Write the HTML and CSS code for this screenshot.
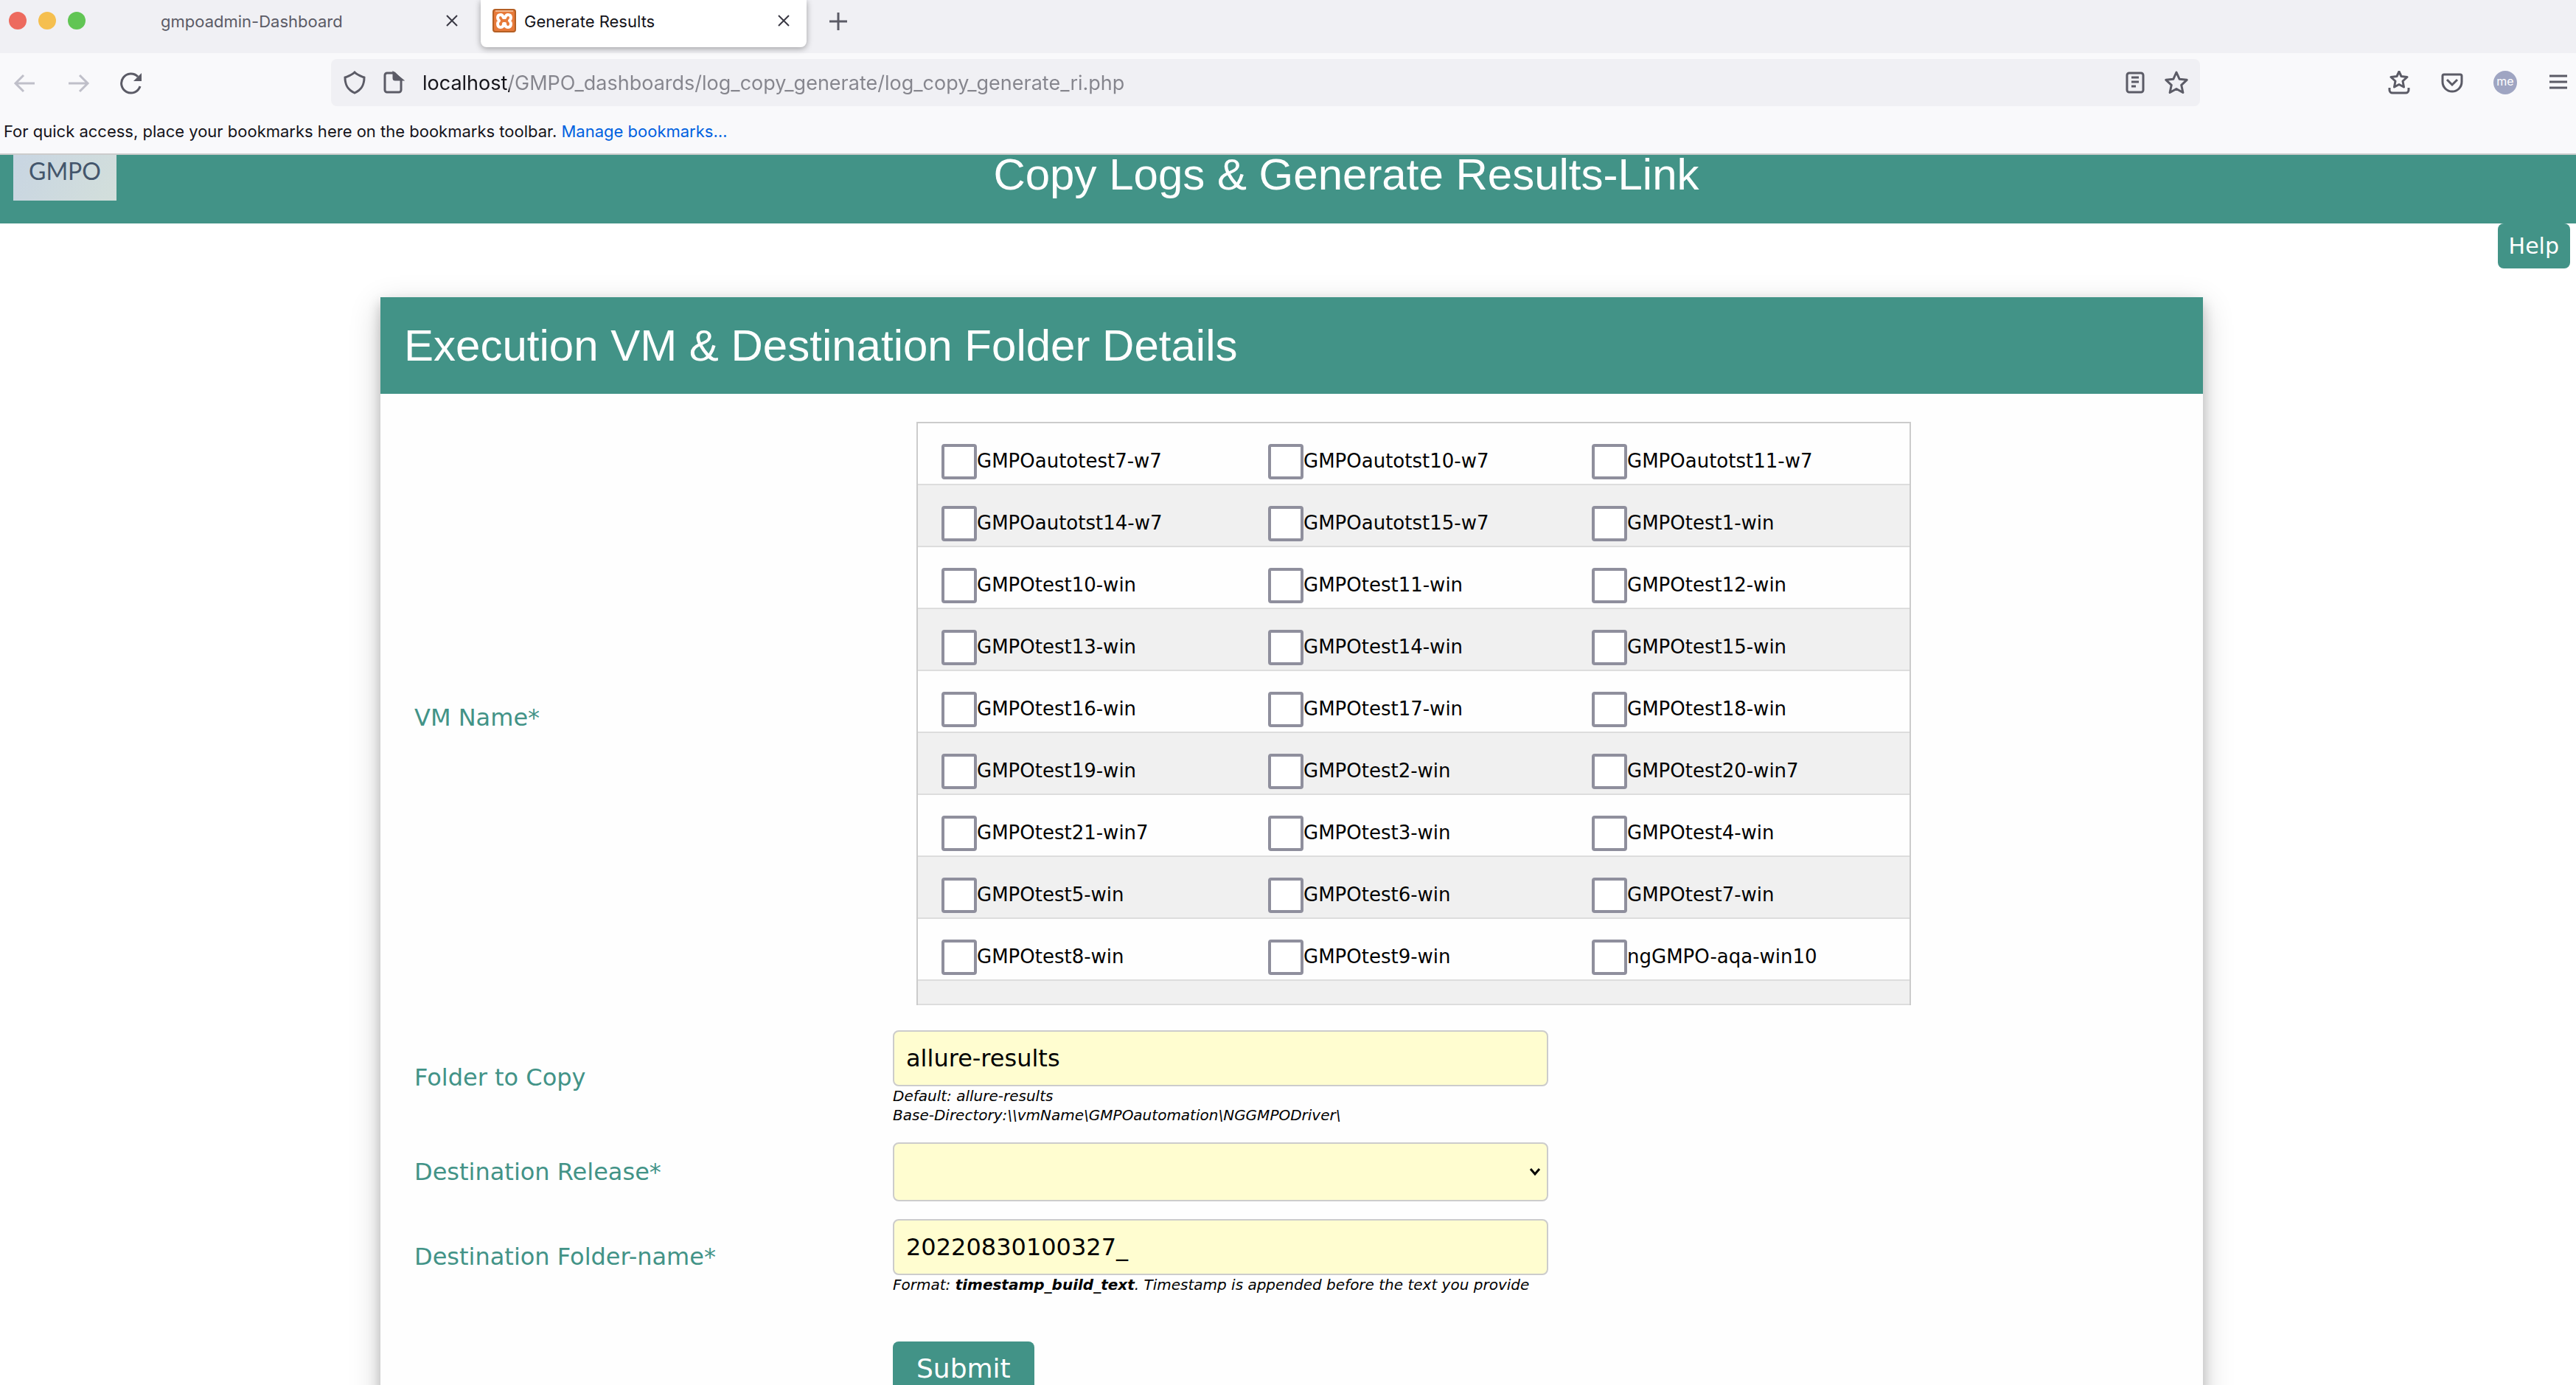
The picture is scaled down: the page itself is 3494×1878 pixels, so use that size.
FILE: index.html
```html
<!DOCTYPE html>
<html lang="en">
<head>
<meta charset="utf-8">
<title>Generate Results</title>
<link rel="stylesheet" href="styles.css">
</head>
<body>
<div class="browser">
  <div class="tabstrip">
    <div class="lights"><span class="light light-red"></span><span class="light light-yellow"></span><span class="light light-green"></span></div>
    <div class="tab">
      <span class="tab-title">gmpoadmin-Dashboard</span>
      <button class="icon-button" type="button" aria-label="Close tab"><svg class="icon-small" viewBox="0 0 16 16"><path d="M1 1l14 14M15 1L1 15"/></svg></button>
    </div>
    <div class="tab tab-active">
      <svg class="favicon" viewBox="0 0 32 32"><rect x="1" y="1" width="30" height="30" rx="3" fill="#e77a3a" stroke="#b45f24" stroke-width="2"/><path d="M4 3h24" stroke="#f3b78e" stroke-width="2"/><path d="M11 8c-3 0-4 2-4 4 0 2 1 3 2 4-1 1-2 2-2 4 0 3 1 5 4 5 3 0 4-2 4-5h2c0 3 1 5 4 5 3 0 4-2 4-5 0-2-1-3-2-4 1-1 2-2 2-4 0-2-1-4-4-4-2 0-3 1-4 4h-2c-1-3-2-4-4-4z" fill="none" stroke="#fff" stroke-width="4" stroke-linejoin="round"/></svg>
      <span class="tab-title">Generate Results</span>
      <button class="icon-button" type="button" aria-label="Close tab"><svg class="icon-small" viewBox="0 0 16 16"><path d="M1 1l14 14M15 1L1 15"/></svg></button>
    </div>
    <button class="icon-button new-tab" type="button" aria-label="New tab"><svg class="icon" viewBox="0 0 32 32"><path d="M16 5v24M4 17h24"/></svg></button>
  </div>
  <div class="toolbar">
    <div class="nav">
      <button class="icon-button muted" type="button" aria-label="Back"><svg class="icon" viewBox="0 0 32 32"><path d="M29 17H3M14 6L3 17l11 11"/></svg></button>
      <button class="icon-button muted" type="button" aria-label="Forward"><svg class="icon" viewBox="0 0 32 32"><path d="M3 17h26M18 6l11 11-11 11"/></svg></button>
      <button class="icon-button" type="button" aria-label="Reload"><svg class="icon" viewBox="0 0 32 32"><path d="M28 21A13 13 0 1 1 25 8"/><path d="M30 3v11H19z" fill="currentColor" stroke="none"/></svg></button>
    </div>
    <div class="urlbar">
      <svg class="icon" viewBox="0 0 32 32"><path d="M16 2C12 6 8 7 3 9c0 11 4 17 13 21 9-4 13-10 13-21-5-2-9-3-13-7z"/></svg>
      <svg class="icon" viewBox="0 0 32 32"><path d="M18 3H8a3 3 0 0 0-3 3v20a3 3 0 0 0 3 3h16a3 3 0 0 0 3-3V12z"/><path d="M17 3v7a2 2 0 0 0 2 2h9z" fill="currentColor"/></svg>
      <input class="url" type="text" aria-label="Address" value="localhost/GMPO_dashboards/log_copy_generate/log_copy_generate_ri.php">
      <div class="url-actions">
        <button class="icon-button" type="button" aria-label="Reader view"><svg class="icon" viewBox="0 0 32 32"><rect x="5" y="3" width="22" height="26" rx="3"/><path d="M11 9h10M11 15h10M11 21h6"/></svg></button>
        <button class="icon-button" type="button" aria-label="Bookmark"><svg class="icon" viewBox="0 0 32 32"><path d="M16 2l4.200 9.300 10 1-7.500 7 2.200 10.200L16 24.500l-8.900 5L9.300 19.300l-7.500-7 10-1z" stroke-linejoin="round"/></svg></button>
      </div>
    </div>
    <div class="actions">
      <button class="icon-button" type="button" aria-label="Bookmarks"><svg class="icon" viewBox="0 0 32 32"><path d="M16 1l3 6.500 8 1-6 5.500 1.500 8L16 18.500 9.500 22l1.500-8-6-5.500 8-1zM3 23v3a4 4 0 0 0 4 4h18a4 4 0 0 0 4-4v-3" stroke-linejoin="round"/></svg></button>
      <button class="icon-button" type="button" aria-label="Pocket"><svg class="icon" viewBox="0 0 32 32"><path d="M5 5h22a2 2 0 0 1 2 2v8a13 13 0 0 1-26 0V7a2 2 0 0 1 2-2zM9 12l7 7 7-7"/></svg></button>
      <button class="avatar" type="button">me</button>
      <button class="icon-button" type="button" aria-label="Menu"><svg class="icon" viewBox="0 0 32 32"><path d="M4 7h24M4 15h24M4 23h24"/></svg></button>
    </div>
  </div>
  <div class="bookmarks">For quick access, place your bookmarks here on the bookmarks toolbar. <a href="#bookmarks">Manage bookmarks…</a></div>
</div>

<div class="page">
  <header class="banner">
    <div class="logo">GMPO</div>
    <h1 class="title">Copy Logs &amp; Generate Results-Link</h1>
  </header>
  <div class="help-row"><button class="help" type="button">Help</button></div>

  <main class="card">
    <h2 class="card-title">Execution VM &amp; Destination Folder Details</h2>
    <form class="form">
      <span class="label" id="vm-label">VM Name*</span>
      <div class="vm-box">
        <table class="vms" aria-labelledby="vm-label">
          <colgroup><col class="col-a"><col class="col-b"><col></colgroup>
          <tbody>
          <tr><td><label><input type="checkbox">GMPOautotest7-w7</label></td><td><label><input type="checkbox">GMPOautotst10-w7</label></td><td><label><input type="checkbox">GMPOautotst11-w7</label></td></tr>
          <tr><td><label><input type="checkbox">GMPOautotst14-w7</label></td><td><label><input type="checkbox">GMPOautotst15-w7</label></td><td><label><input type="checkbox">GMPOtest1-win</label></td></tr>
          <tr><td><label><input type="checkbox">GMPOtest10-win</label></td><td><label><input type="checkbox">GMPOtest11-win</label></td><td><label><input type="checkbox">GMPOtest12-win</label></td></tr>
          <tr><td><label><input type="checkbox">GMPOtest13-win</label></td><td><label><input type="checkbox">GMPOtest14-win</label></td><td><label><input type="checkbox">GMPOtest15-win</label></td></tr>
          <tr><td><label><input type="checkbox">GMPOtest16-win</label></td><td><label><input type="checkbox">GMPOtest17-win</label></td><td><label><input type="checkbox">GMPOtest18-win</label></td></tr>
          <tr><td><label><input type="checkbox">GMPOtest19-win</label></td><td><label><input type="checkbox">GMPOtest2-win</label></td><td><label><input type="checkbox">GMPOtest20-win7</label></td></tr>
          <tr><td><label><input type="checkbox">GMPOtest21-win7</label></td><td><label><input type="checkbox">GMPOtest3-win</label></td><td><label><input type="checkbox">GMPOtest4-win</label></td></tr>
          <tr><td><label><input type="checkbox">GMPOtest5-win</label></td><td><label><input type="checkbox">GMPOtest6-win</label></td><td><label><input type="checkbox">GMPOtest7-win</label></td></tr>
          <tr><td><label><input type="checkbox">GMPOtest8-win</label></td><td><label><input type="checkbox">GMPOtest9-win</label></td><td><label><input type="checkbox">ngGMPO-aqa-win10</label></td></tr>
          <tr class="spacer"><td colspan="3"></td></tr>
          </tbody>
        </table>
      </div>

      <label class="label" for="folder">Folder to Copy</label>
      <div>
        <input class="control" id="folder" type="text" value="allure-results">
        <p class="hint">Default: allure-results<br>Base-Directory:\\vmName\GMPOautomation\NGGMPODriver\</p>
      </div>

      <label class="label" for="release">Destination Release*</label>
      <div class="select-wrap">
        <select class="control control-select" id="release"><option></option></select>
        <svg class="chevron" viewBox="0 0 16 12"><path d="M2 2l6 7 6-7"/></svg>
      </div>

      <label class="label" for="name">Destination Folder-name*</label>
      <div>
        <input class="control" id="name" type="text" value="20220830100327_">
        <p class="hint">Format: <b>timestamp_build_text</b>. Timestamp is appended before the text you provide</p>
      </div>

      <div class="submit-row"><button class="submit" type="submit">Submit</button></div>
    </form>
  </main>
</div>
</body>
</html>
```
FILE: styles.css
```css
* { box-sizing: border-box; }

body {
  margin: 0;
  height: 100vh;
  display: flex;
  flex-direction: column;
  overflow: hidden;
  background: #fff;
  color: #000;
  font-family: Verdana, "DejaVu Sans", sans-serif;
}

button, input, select { font-family: inherit; }

/* Browser window */
.browser {
  flex: none;
  background: #f9f9fb;
  border-bottom: 2px solid #ccc;
  color: #15141a;
  font-family: Inter, sans-serif;
  font-size: 22px;
}

.tabstrip {
  display: flex;
  height: 72px;
  padding-left: 12px;
  background: #f0f0f4;
}

.lights { display: flex; gap: 16px; padding-top: 16px; }
.light { width: 24px; height: 24px; border-radius: 50%; }
.light-red { background: #ed6a5e; }
.light-yellow { background: #f5bf4f; }
.light-green { background: #61c554; }

.tab {
  display: flex;
  align-items: center;
  width: 442px;
  height: 64px;
  padding: 0 23px 8px 16px;
  color: #5b5b66;
}
.tab:not(.tab-active) { width: 524px; padding-left: 102px; margin-right: 12px; padding-right: 19px; }
.tab-active {
  background: #fff;
  border-radius: 0 0 8px 8px;
  box-shadow: 0 2px 8px rgba(0, 0, 0, .35);
  color: #15141a;
}
.tab-title { flex: 1; line-height: 28px; padding-top: 2px; white-space: nowrap; }
.favicon { width: 32px; height: 32px; margin-right: 11px; }

.icon-button {
  display: flex;
  padding: 0;
  border: 0;
  background: none;
  color: #5b5b66;
}
.muted { color: #bfbfc9; }
.icon, .icon-small { width: 32px; height: 32px; fill: none; stroke: currentColor; stroke-width: 3; }
.icon-small { width: 16px; height: 16px; stroke: #3a3944; stroke-width: 2; }
.new-tab { margin: 12px 0 0 27px; height: 32px; }

.toolbar { display: flex; align-items: center; height: 80px; }
.nav { display: flex; gap: 40px; width: 449px; padding-left: 18px; }
.urlbar {
  flex: 1;
  display: flex;
  align-items: center;
  gap: 20px;
  height: 64px;
  padding: 0 16px;
  background: #f0f0f4;
  border-radius: 8px;
  color: #5b5b66;
}
.url-actions { display: flex; gap: 24px; }
.url {
  flex: 1;
  height: 48px;
  margin-left: 4px;
  padding: 0;
  border: 0;
  background: linear-gradient(90deg, #15141a 118px, #85858d 118px);
  -webkit-background-clip: text;
  background-clip: text;
  color: transparent;
  font-size: 27px;
}
.actions { display: flex; align-items: center; gap: 40px; width: 510px; padding-right: 8px; justify-content: flex-end; }
.avatar {
  width: 32px;
  height: 32px;
  padding: 0 0 4px;
  border: 0;
  border-radius: 50%;
  background: #9fa5c2;
  color: #fff;
  font-size: 16px;
  line-height: 24px;
}

.bookmarks { height: 56px; padding: 12px 5px; line-height: 28px; }
.bookmarks a { color: #0061e0; text-decoration: none; }

/* Page */
.page { flex: 1; min-height: 0; }

.banner {
  display: flex;
  align-items: flex-start;
  height: 93px;
  padding-left: 18px;
  background: #429387;
}
.logo {
  width: 140px;
  height: 62px;
  padding-top: 6px;
  background: linear-gradient(120deg, #c8d5e2, #d3dfdb);
  color: #44566c;
  font-family: Lato, sans-serif;
  font-size: 32px;
  line-height: 32px;
  text-align: center;
}
.title {
  flex: 1;
  margin: 0;
  color: #fff;
  font-family: Arial, "Liberation Sans", sans-serif;
  font-size: 60px;
  font-weight: 400;
  line-height: 54px;
  text-align: center;
}

.help-row { display: flex; justify-content: flex-end; padding-right: 8px; }
.help {
  height: 61px;
  padding: 0 15px;
  border: 0;
  border-radius: 8px;
  background: #429387;
  color: #fff;
  font-size: 30px;
}

.card {
  margin: 39px 506px 0 516px;
  padding-bottom: 64px;
  background: #fefefe;
  box-shadow: 0 8px 16px rgba(0, 0, 0, .2), 0 12px 40px rgba(0, 0, 0, .19);
}
.card-title {
  margin: 0;
  padding: 32px;
  background: #429387;
  color: #fff;
  font-family: Arial, "Liberation Sans", sans-serif;
  font-size: 60px;
  font-weight: 400;
  line-height: 67px;
}

.form {
  display: grid;
  grid-template-columns: 649px 1fr;
  row-gap: 24px;
  align-items: center;
  padding: 38px 0 0 46px;
}
.label { color: #429387; font-size: 32px; }

.vm-box { margin: 0 396px 10px 32px; border: 2px solid #ccc; border-bottom: 0; }
.vms { width: 100%; table-layout: fixed; border-spacing: 0; font-size: 26px; }
.col-a { width: 443px; }
.col-b { width: 439px; }
.vms tr:nth-child(even) { background: #f0f0f0; }
.vms td { height: 84px; padding: 28px 0 6px 32px; border-bottom: 2px solid #ddd; }
.vms .spacer td { height: 33px; padding: 0; }
.vms label { display: flex; height: 48px; line-height: 46px; }
.vms input {
  appearance: none;
  width: 48px;
  height: 48px;
  margin: 0;
  border: 4px solid #8f8f9d;
  border-radius: 4px;
  background: #fff;
}

.control {
  display: block;
  width: 50%;
  height: 76px;
  padding: 0 16px;
  border: 2px solid #ccc;
  border-radius: 8px;
  background: #fffdd0;
  color: #000;
  font-size: 32px;
}
.select-wrap { display: grid; align-items: center; }
.control-select { appearance: none; height: 80px; grid-area: 1 / 1; }
.chevron {
  grid-area: 1 / 1;
  width: 16px;
  height: 12px;
  margin-left: calc(50% - 26px);
  fill: none;
  stroke: #000;
  stroke-width: 3;
  pointer-events: none;
}
.hint { margin: 0; font-size: 20px; font-style: italic; line-height: 26px; }

.submit-row { grid-column: 2; padding-top: 40px; }
.submit {
  height: 72px;
  padding: 0 32px;
  border: 0;
  border-radius: 8px;
  background: #429387;
  color: #fff;
  font-size: 36px;
}
```
